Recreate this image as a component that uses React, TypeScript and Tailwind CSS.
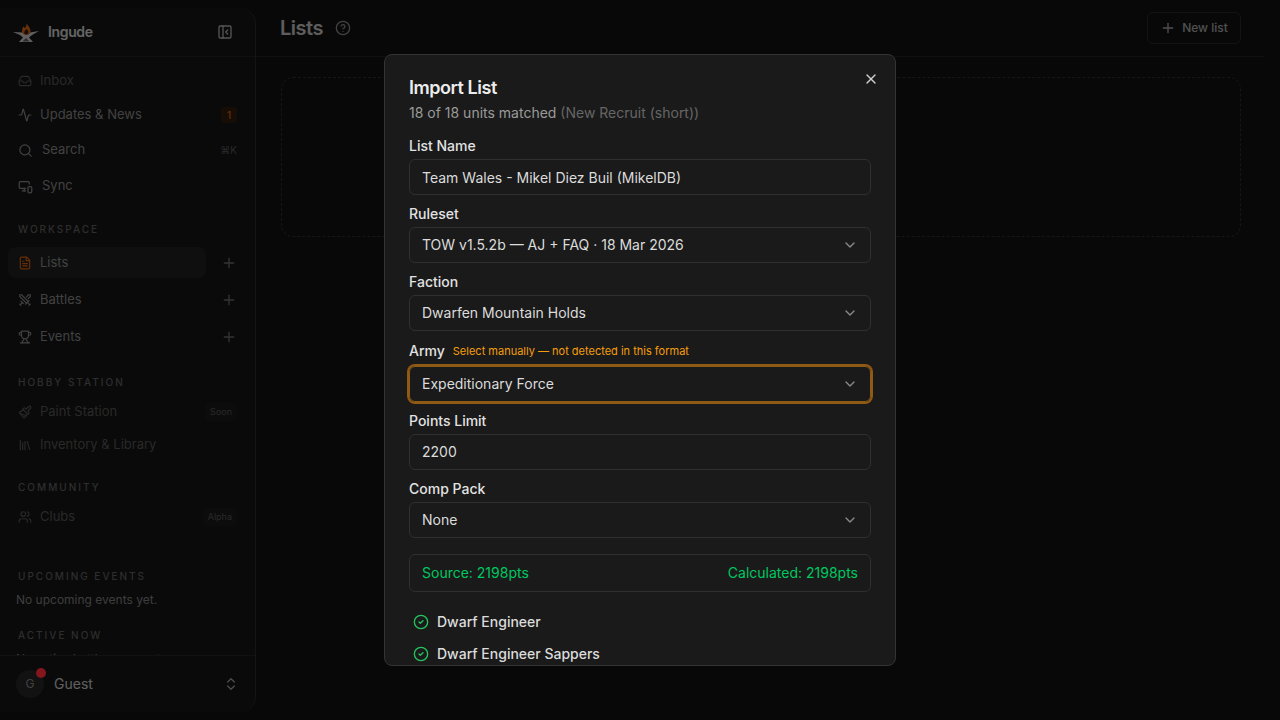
import {
  Activity,
  ChevronDown,
  ChevronsUpDown,
  CircleCheck,
  CircleHelp,
  FileText,
  Inbox,
  Library,
  MonitorSmartphone,
  PanelLeftClose,
  Paintbrush,
  Plus,
  Search,
  Swords,
  Trophy,
  Users,
  X,
} from "lucide-react";
import type { ReactNode } from "react";

const Logo = () => (
  <svg viewBox="0 0 28 22" className="w-[28px] h-[22px]">
    <path d="M1 11 L10 11.5 L18 11.5 L27 10 L20 14 L17 16.5 L21 21 L7 21 L11 16.5 L8 14 Z" fill="#f0f0f0" />
    <path d="M10.5 20.5 L14 17 L17.5 20.5 Z" fill="#707070" />
    <path d="M14.5 2 C15.5 4.5 18.5 6.5 18.5 10 C18.5 12.5 16.8 14 14.5 14 C11.8 14 10 12.5 10 10 C10 8 10.8 7 11.2 5.5 C12 6 12.5 6.5 13 7.2 C14 5.5 14.8 4 14.5 2 Z" fill="#ff7a1c" />
    <path d="M14.5 8 C15.8 9.2 16.5 10.2 16.5 11.2 C16.5 12.6 15.5 13.4 14.3 13.4 C13 13.4 12.2 12.5 12.2 11.4 C12.2 10 13.8 9.2 14.5 8 Z" fill="#3a2010" />
  </svg>
);

const SectionLabel = ({ children, className }: { children: ReactNode; className: string }) => (
  <div className={`h-4 pl-[18px] text-[10px] leading-4 font-medium tracking-[0.2em] uppercase text-[#737373] ${className}`}>
    {children}
  </div>
);

const Field = ({ label, hint, children }: { label: string; hint?: string; children: ReactNode }) => (
  <div className="flex flex-col gap-[3px]">
    <div className={`flex items-center gap-2 ${hint ? "h-[23px] pb-px" : "h-5"}`}>
      <span className="text-sm font-medium text-[#e2e2e2]">{label}</span>
      {hint && <span className="text-[11px] text-[#f59e0b]">{hint}</span>}
    </div>
    {children}
  </div>
);

const Box = ({ value, select, warn, className = "" }: { value: string; select?: boolean; warn?: boolean; className?: string }) => (
  <div
    className={`h-9 rounded-md border px-3 flex items-center justify-between text-sm text-[#dcdcdc] ${
      warn ? "border-[#8f5a14] ring-2 ring-[#8f5a14]" : "border-[#303030]"
    } ${className}`}
  >
    <span>{value}</span>
    {select && <ChevronDown className="w-4 h-4 text-[#8a8a8a]" />}
  </div>
);

const Unit = ({ name }: { name: string }) => (
  <div className="h-7 flex items-center gap-2 px-1">
    <CircleCheck className="w-4 h-4 shrink-0 text-[#22c55e]" />
    <span className="text-sm font-medium text-[#dcdcdc]">{name}</span>
  </div>
);

export default function App() {
  return (
    <div className="relative h-[720px] w-[1280px] overflow-hidden bg-[#151515] flex font-['Inter',sans-serif] antialiased">
      {/* sidebar */}
      <aside className="my-2 h-[704px] w-[256px] shrink-0 flex flex-col rounded-r-2xl border-r border-[#363636] bg-[#191919] text-[#a3a3a3]">
        <div className="h-[49px] shrink-0 border-b border-[#2a2a2a] flex items-center pl-3 pr-[22px]">
          <Logo />
          <span className="ml-2 text-sm font-semibold tracking-tight text-[#fafafa]">Ingude</span>
          <PanelLeftClose className="ml-auto w-4 h-4 text-[#d4d4d4]" />
        </div>

        <div className="flex-1 min-h-0 overflow-hidden">
          <div className="mt-[7px] h-[34px] flex items-center gap-2 pl-[18px] text-[13px] text-[#666666]">
            <Inbox className="w-[14px] h-[14px]" />
            <span>Inbox</span>
          </div>
          <div className="h-[34px] flex items-center gap-2 pl-[18px] pr-[18px] text-[13px]">
            <Activity className="w-[14px] h-[14px]" />
            <span>Updates &amp; News</span>
            <span className="ml-auto w-4 h-4 rounded bg-[#3a2112] text-[10px] font-medium text-[#f97316] flex items-center justify-center">1</span>
          </div>
          <div className="h-9 flex items-center gap-[9px] pl-[18px] pr-[18px] text-[13px]">
            <Search className="w-[15px] h-[15px]" />
            <span>Search</span>
            <span className="ml-auto text-[10px] text-[#666666]">⌘K</span>
          </div>
          <div className="h-9 flex items-center gap-[9px] pl-[18px] text-[13px]">
            <MonitorSmartphone className="w-[15px] h-[15px]" />
            <span>Sync</span>
          </div>

          <SectionLabel className="mt-[17px]">Workspace</SectionLabel>
          <div className="mt-[7px] h-[37px] flex items-center pl-2 pr-[18px]">
            <div className="h-[31px] w-[198px] rounded-lg bg-[#262626] flex items-center gap-2 pl-[10px] text-[13px]">
              <FileText className="w-[14px] h-[14px] text-[#f97316]" />
              <span>Lists</span>
            </div>
            <Plus className="ml-auto w-4 h-4 text-[#808080]" />
          </div>
          <div className="h-[37px] flex items-center gap-2 pl-[18px] pr-[18px] text-[13px]">
            <Swords className="w-[14px] h-[14px]" />
            <span>Battles</span>
            <Plus className="ml-auto w-4 h-4 text-[#808080]" />
          </div>
          <div className="h-[37px] flex items-center gap-2 pl-[18px] pr-[18px] text-[13px]">
            <Trophy className="w-[14px] h-[14px]" />
            <span>Events</span>
            <Plus className="ml-auto w-4 h-4 text-[#808080]" />
          </div>

          <SectionLabel className="mt-[19px]">Hobby Station</SectionLabel>
          <div className="mt-[5px] h-[33px] flex items-center gap-2 pl-[18px] pr-[18px] text-[13px] text-[#666666]">
            <Paintbrush className="w-[14px] h-[14px]" />
            <span>Paint Station</span>
            <span className="ml-auto h-[18px] px-[5px] rounded bg-[#202020] text-[9px] flex items-center">Soon</span>
          </div>
          <div className="h-[33px] flex items-center gap-2 pl-[18px] text-[13px] text-[#666666]">
            <Library className="w-[14px] h-[14px]" />
            <span>Inventory &amp; Library</span>
          </div>

          <SectionLabel className="mt-[18px]">Community</SectionLabel>
          <div className="mt-[5px] h-[33px] flex items-center gap-2 pl-[18px] pr-[18px] text-[13px] text-[#666666]">
            <Users className="w-[14px] h-[14px]" />
            <span>Clubs</span>
            <span className="ml-auto h-[18px] px-[5px] rounded bg-[#202020] text-[9px] flex items-center">Alpha</span>
          </div>

          <SectionLabel className="mt-[35px]">Upcoming Events</SectionLabel>
          <p className="mt-2 pl-4 text-xs text-[#999999]">No upcoming events yet.</p>
          <SectionLabel className="mt-[19px]">Active Now</SectionLabel>
          <p className="mt-2 pl-4 text-xs text-[#999999]">No active battles or events.</p>
        </div>

        <div className="h-[57px] shrink-0 border-t border-[#2e2e2e] flex items-center pl-4 pr-4">
          <div className="w-7 h-7 rounded-full bg-[#2e2e2e] flex items-center justify-center text-xs text-[#a3a3a3]">
            G
          </div>
          <span className="ml-[10px] text-sm text-[#ededed]">Guest</span>
          <ChevronsUpDown className="ml-auto w-4 h-4 text-[#bdbdbd]" />
        </div>
      </aside>

      {/* main */}
      <main className="w-[1009px] shrink-0">
        <header className="h-[57px] border-b border-[#2a2a2a] flex items-center pl-6 pr-6">
          <h1 className="text-xl font-semibold tracking-tight text-[#e8e8e8]">Lists</h1>
          <CircleHelp className="ml-3 w-4 h-4 text-[#a3a3a3]" />
          <button className="ml-auto h-8 w-[94px] rounded-md border border-[#333333] flex items-center justify-center gap-[6px] text-xs font-medium text-[#c8c8c8]">
            <Plus className="w-4 h-4" />
            New list
          </button>
        </header>
        <div className="pt-5 pl-[25px] pr-6">
          <div className="h-[160px] rounded-xl border border-dashed border-[#383838]" />
        </div>
      </main>

      {/* overlay + dialog */}
      <div className="absolute inset-0 bg-black/60" />
      <span className="absolute left-[36px] top-[668px] w-[10px] h-[10px] rounded-full bg-[#85161e]" />
      <div className="absolute left-[384px] top-[54px] w-[512px] h-[612px] overflow-hidden rounded-lg border border-[#333333] bg-[#1a1a1a] p-6">
        <X className="absolute right-4 top-4 w-4 h-4 text-[#d0d0d0]" />
        <h2 className="text-lg leading-none font-semibold tracking-tight text-[#ececec]">Import List</h2>
        <p className="mt-[6px] mb-[13px] text-sm text-[#9a9a9a]">
          18 of 18 units matched <span className="text-[#666666]">(New Recruit (short))</span>
        </p>
        <div className="flex flex-col gap-[9px]">
          <Field label="List Name">
            <Box value="Team Wales - Mikel Diez Buil (MikelDB)" className="pt-[2px]" />
          </Field>
          <Field label="Ruleset">
            <Box value="TOW v1.5.2b — AJ + FAQ · 18 Mar 2026" select />
          </Field>
          <Field label="Faction">
            <Box value="Dwarfen Mountain Holds" select />
          </Field>
          <Field label="Army" hint="Select manually — not detected in this format">
            <Box value="Expeditionary Force" select warn />
          </Field>
          <Field label="Points Limit">
            <Box value="2200" />
          </Field>
          <Field label="Comp Pack">
            <Box value="None" select />
          </Field>
        </div>
        <div className="mt-4 h-[38px] rounded-md border border-[#303030] px-3 flex items-center justify-between text-sm text-[#00c860]">
          <span>Source: 2198pts</span>
          <span>Calculated: 2198pts</span>
        </div>
        <div className="mt-4 flex flex-col gap-1">
          <Unit name="Dwarf Engineer" />
          <Unit name="Dwarf Engineer Sappers" />
        </div>
      </div>
    </div>
  );
}
